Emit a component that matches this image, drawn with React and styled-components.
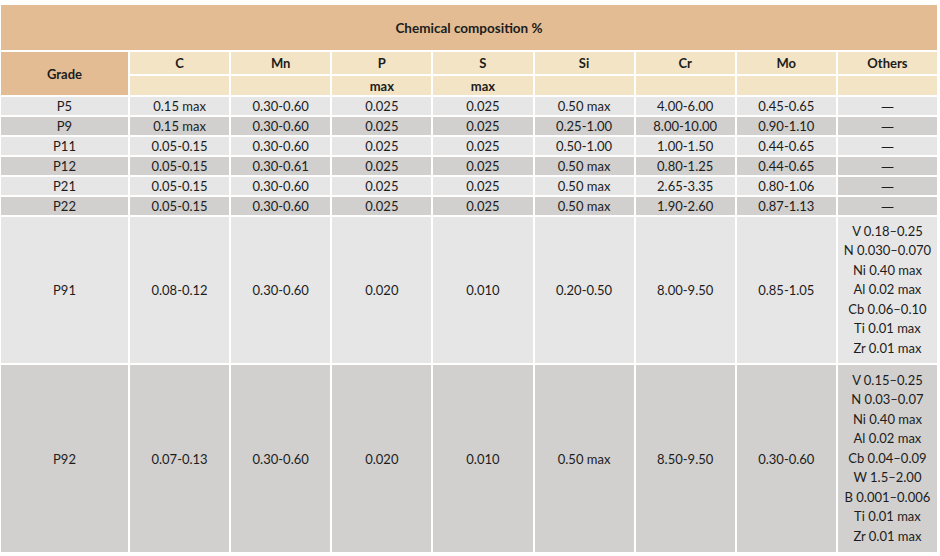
import React from 'react'
import styled, { createGlobalStyle } from 'styled-components'

const GlobalStyle = createGlobalStyle`
  html, body {
    margin: 0;
    padding: 0;
    background: #ffffff;
    overflow: hidden;
  }
  body {
    font-family: Lato, "Open Sans", "Liberation Sans", sans-serif;
    color: #1c1c1c;
  }
`;

const TAN = '#e3bc94';
const CREAM = '#f3e4c5';
const LIGHT = '#e6e6e6';
const DARK = '#d1d0ce';

const columns = ['C', 'Mn', 'P', 'S', 'Si', 'Cr', 'Mo', 'Others'];
const subHeads = ['', '', 'max', 'max', '', '', '', ''];

const rows = [
  { grade: 'P5', values: ['0.15 max', '0.30-0.60', '0.025', '0.025', '0.50 max', '4.00-6.00', '0.45-0.65'] },
  { grade: 'P9', values: ['0.15 max', '0.30-0.60', '0.025', '0.025', '0.25-1.00', '8.00-10.00', '0.90-1.10'] },
  { grade: 'P11', values: ['0.05-0.15', '0.30-0.60', '0.025', '0.025', '0.50-1.00', '1.00-1.50', '0.44-0.65'] },
  { grade: 'P12', values: ['0.05-0.15', '0.30-0.61', '0.025', '0.025', '0.50 max', '0.80-1.25', '0.44-0.65'] },
  { grade: 'P21', values: ['0.05-0.15', '0.30-0.60', '0.025', '0.025', '0.50 max', '2.65-3.35', '0.80-1.06'], othersDark: true },
  { grade: 'P22', values: ['0.05-0.15', '0.30-0.60', '0.025', '0.025', '0.50 max', '1.90-2.60', '0.87-1.13'] },
  {
    grade: 'P91',
    height: 146,
    values: ['0.08-0.12', '0.30-0.60', '0.020', '0.010', '0.20-0.50', '8.00-9.50', '0.85-1.05'],
    others: ['V 0.18–0.25', 'N 0.030–0.070', 'Ni 0.40 max', 'Al 0.02 max', 'Cb 0.06–0.10', 'Ti 0.01 max', 'Zr 0.01 max'],
  },
  {
    grade: 'P92',
    height: 187,
    values: ['0.07-0.13', '0.30-0.60', '0.020', '0.010', '0.50 max', '8.50-9.50', '0.30-0.60'],
    others: ['V 0.15–0.25', 'N 0.03–0.07', 'Ni 0.40 max', 'Al 0.02 max', 'Cb 0.04–0.09', 'W 1.5–2.00', 'B 0.001–0.006', 'Ti 0.01 max', 'Zr 0.01 max'],
  },
];

export default function App() {
  return (
    <>
      <GlobalStyle />
      <Page>
        <Table>
          <colgroup>
            <col style={{ width: '127px' }} />
            {columns.map((c) => (
              <col key={c} />
            ))}
          </colgroup>
          <thead>
            <tr>
              <TitleCell colSpan={9}>Chemical composition %</TitleCell>
            </tr>
            <tr>
              <HeadCell rowSpan={2} $tan>
                Grade
              </HeadCell>
              {columns.map((c) => (
                <HeadCell key={c} $h={22}>
                  {c}
                </HeadCell>
              ))}
            </tr>
            <tr>
              {subHeads.map((s, i) => (
                <HeadCell key={i} $h={19}>
                  {s}
                </HeadCell>
              ))}
            </tr>
          </thead>
          <tbody>
            {rows.map((row, index) => {
              const tone = index % 2 === 0 ? LIGHT : DARK;
              return (
                <tr key={row.grade}>
                  <Cell $bg={tone} $h={row.height || 18}>
                    {row.grade}
                  </Cell>
                  {row.values.map((v, i) => (
                    <Cell key={i} $bg={tone}>
                      {v}
                    </Cell>
                  ))}
                  <Cell $bg={row.othersDark ? DARK : tone}>
                    {row.others ? (
                      <Others>
                        {row.others.map((o) => (
                          <span key={o}>{o}</span>
                        ))}
                      </Others>
                    ) : (
                      <Dash>—</Dash>
                    )}
                  </Cell>
                </tr>
              );
            })}
          </tbody>
        </Table>
      </Page>
    </>
  );
}

const Page = styled.div`
  width: 940px;
  height: 556px;
  padding-top: 3px;
  margin-left: -1px;
  box-sizing: border-box;
`;

const Table = styled.table`
  width: 940px;
  table-layout: fixed;
  border-collapse: separate;
  border-spacing: 2px;
  font-size: 13px;
`;

const TitleCell = styled.th`
  height: 45px;
  padding: 0;
  background: ${TAN};
  font-weight: 700;
  font-size: 13.5px;
  text-align: center;
  vertical-align: middle;
`;

const HeadCell = styled.th`
  height: ${(p) => (p.$h ? `${p.$h}px` : 'auto')};
  padding: 0;
  background: ${(p) => (p.$tan ? TAN : CREAM)};
  font-weight: 700;
  font-size: 13px;
  line-height: 16px;
  text-align: center;
  vertical-align: middle;
`;

const Cell = styled.td`
  height: ${(p) => (p.$h ? `${p.$h}px` : 'auto')};
  padding: 0;
  background: ${(p) => p.$bg};
  text-align: center;
  vertical-align: middle;
  line-height: 18px;
  white-space: nowrap;
`;

const Dash = styled.div`
  height: 18px;
  overflow: hidden;
  font-family: "DejaVu Sans", sans-serif;
  font-size: 13px;
  line-height: 20px;
`;

const Others = styled.div`
  display: flex;
  flex-direction: column;
  align-items: center;
  span {
    line-height: 19.5px;
  }
`;
